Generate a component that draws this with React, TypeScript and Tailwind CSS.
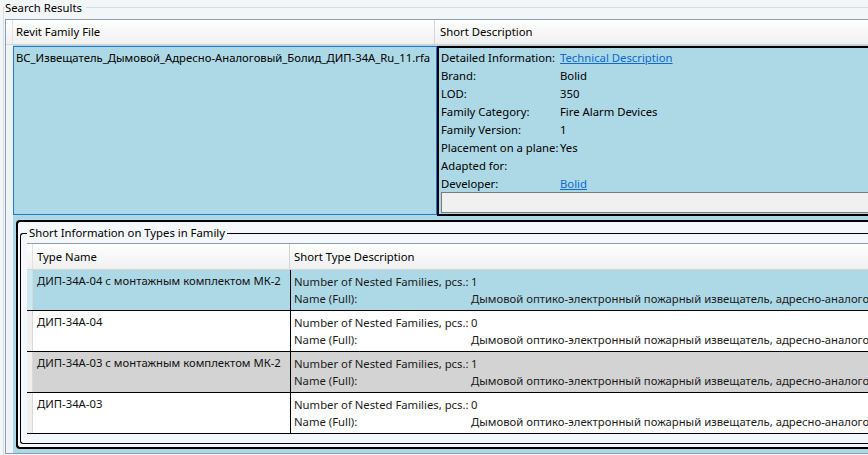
import * as React from "react";

const details: [string, string, boolean?][] = [
  ["Detailed Information:", "Technical Description", true],
  ["Brand:", "Bolid"],
  ["LOD:", "350"],
  ["Family Category:", "Fire Alarm Devices"],
  ["Family Version:", "1"],
  ["Placement on a plane:", "Yes"],
  ["Adapted for:", ""],
  ["Developer:", "Bolid", true],
];

const FULL_NAME = "Дымовой оптико-электронный пожарный извещатель, адресно-аналоговый, ДИП-34А";

const types = [
  { name: "ДИП-34А-04 с монтажным комплектом МК-2", nested: "1", bg: "bg-[#add8e6]" },
  { name: "ДИП-34А-04", nested: "0", bg: "bg-white" },
  { name: "ДИП-34А-03 с монтажным комплектом МК-2", nested: "1", bg: "bg-[#d3d3d3]" },
  { name: "ДИП-34А-03", nested: "0", bg: "bg-white" },
];

function TypesGrid() {
  return (
    <div className="border-t border-[#8a9fb5]">
      <div className="flex h-[26px] border-b border-[#d5d5d5] bg-gradient-to-b from-white to-[#f0f0f0]">
        <div className="w-[6px] border-r border-[#e2e2e2]" />
        <div className="flex w-[257px] items-center border-r border-[#d5d5d5] pl-[4px]">Type Name</div>
        <div className="flex flex-1 items-center pl-[4px]">Short Type Description</div>
      </div>
      {types.map((t, i) => (
        <div key={i} className={`flex h-[41px] border-b border-black ${t.bg}`}>
          <div className={`w-[6px] border-r border-[#d9d9d9] ${i === 0 ? "bg-[#cfe8f0]" : "bg-[#f0f0f0]"}`} />
          <div className="w-[257px] whitespace-nowrap pl-[4px] pt-[3px] text-[#111]">{t.name}</div>
          <div className="flex-1 whitespace-nowrap border-l border-black pl-[3px] pt-[3px] leading-[17px] text-[#1b1b1b]">
            <div className="flex">
              <span className="w-[177px]">Number of Nested Families, pcs.:</span>
              <span>{t.nested}</span>
            </div>
            <div className="flex">
              <span className="w-[177px]">Name (Full):</span>
              <span>{FULL_NAME}</span>
            </div>
          </div>
        </div>
      ))}
    </div>
  );
}

export default function App() {
  return (
    <div className="h-[455px] w-[868px] overflow-hidden bg-[#f3f6f9] font-['Noto_Sans',sans-serif] text-[11.3px] leading-[16px] text-black">
      <div className="relative ml-[3px] mt-[7px] h-[460px] border-l border-t border-[#d5dfe5] pl-[1px] pt-[11px]">
        <span className="absolute -top-[8px] left-[1px] bg-[#f3f6f9] pr-[4px] leading-[16px]">Search Results</span>

        <div className="overflow-hidden border-b border-l border-t border-[#8a9fb5]">
          {/* header */}
          <div className="flex h-[25px] border-b border-[#d5d5d5] bg-gradient-to-b from-white to-[#f0f0f0]">
            <div className="w-[7px] border-r border-[#e2e2e2]" />
            <div className="flex w-[422px] items-center border-r border-[#d5d5d5] pl-[3px]">Revit Family File</div>
            <div className="flex flex-1 items-center pl-[5px]">Short Description</div>
          </div>

          {/* selected row */}
          <div className="flex">
            <div className="w-[7px] shrink-0 bg-[#eef3f8]" />
            <div className="flex-1 bg-[#add8e6]">
              <div className="flex pt-[1px]">
                <div className="h-[169px] w-[424px] shrink-0 whitespace-nowrap border border-[#2378d0] pl-[2px] pt-[3px]">
                  ВС_Извещатель_Дымовой_Адресно-Аналоговый_Болид_ДИП-34А_Ru_11.rfa
                </div>
                <div className="h-[170px] flex-1 whitespace-nowrap border-b-2 border-l-2 border-t-2 border-black pl-[2px] pt-[1px]">
                  {details.map(([label, value, link], i) => (
                    <div key={i} className="flex h-[18px] items-center">
                      <span className="w-[119px]">{label}</span>
                      <span className={link ? "text-[#0a6ad8] underline" : ""}>{value}</span>
                    </div>
                  ))}
                  <div className="mt-[-1px] h-[21px] border border-[#7a7a7a] bg-[#f0f0f0]" />
                </div>
              </div>

              {/* row details */}
              <div className="pb-[4px] pl-[3px] pt-[4px]">
                <div className="rounded-l-[4px] border-b-2 border-l-2 border-t-2 border-black bg-[#f4f7fb] pb-[3px] pl-[2px] pt-[11px]">
                  <div className="relative rounded-l-[3px] border-b border-l border-t border-black pb-[9px] pl-[6px] pt-[9px]">
                    <span className="absolute -top-[9px] left-[6px] bg-[#f4f7fb] px-[2px]">Short Information on Types in Family</span>
                    <TypesGrid />
                  </div>
                </div>
              </div>
            </div>
          </div>
        </div>
      </div>
    </div>
  );
}
